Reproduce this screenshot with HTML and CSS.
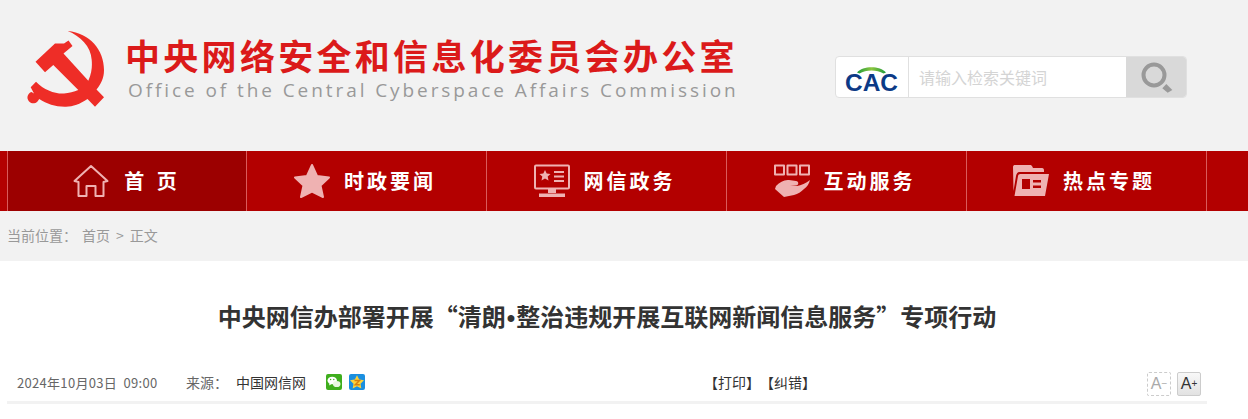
FILE: index.html
```html
<!DOCTYPE html>
<html lang="zh-CN">
<head>
<meta charset="utf-8">
<title>中央网信办部署开展“清朗•整治违规开展互联网新闻信息服务”专项行动</title>
<link rel="stylesheet" href="styles.css">
</head>
<body>
<header class="masthead">
  <svg class="emblem" viewBox="25 28 82 82" width="82" height="82" aria-hidden="true">
    <path class="emblem-fill" d="M35.500 61.700L55 43.500L64 43.500L68.500 40.500L72.500 46L63.500 53.500L88.300 80.700C92 72 92.200 66 91.700 60C91 46 80 36 67.700 31C90 33 104 50 104 70C104 78 101 84 96.500 89.500L104 97.300L95 106.700L87.500 99C80 104 73 106.700 66 106.700C56 107 47 104 39.300 99L38.500 100A5.800 5.800 0 1 1 31.500 92L34 93.500L30.700 87.300L36 81.700C44 90 55 94 64 93.500C69 93 74 92 78.300 90L53.300 65L45 72.300Z"/>
  </svg>
  <div class="brand">
    <div class="brand-cn">中央网络安全和信息化委员会办公室</div>
    <div class="brand-en">Office of the Central Cyberspace Affairs Commission</div>
  </div>
  <form class="search">
    <div class="search-logo">
      <svg class="cac-logo" viewBox="0 0 54 30" width="54" height="30" aria-hidden="true">
        <defs>
          <linearGradient id="cacArc" x1="0" y1="0" x2="1" y2="0">
            <stop offset="0" stop-color="#1f9a3c"/>
            <stop offset=".5" stop-color="#8cc63f"/>
            <stop offset="1" stop-color="#1f9a3c"/>
          </linearGradient>
        </defs>
        <path fill="url(#cacArc)" d="M12 10.500C18 3.500 35 3.500 41 10.500L38.500 11.500C32 7.500 21 7.500 14.500 11.500Z"/>
        <text class="cac-text" x="0" y="29" textLength="53" lengthAdjust="spacingAndGlyphs">CAC</text>
      </svg>
    </div>
    <div class="search-input">请输入检索关键词</div>
    <div class="search-btn">
      <svg class="glass" viewBox="0 0 34 34" width="34" height="34" aria-hidden="true">
        <circle class="glass-ring" cx="14" cy="15" r="10.500"/>
        <path class="glass-handle" d="M22.300 28.300L26.300 24L32.300 30L27.700 32.700Z"/>
      </svg>
    </div>
  </form>
</header>

<nav class="nav">
  <a class="nav-item is-active">
    <svg class="nav-icon" viewBox="0 0 36 34" width="36" height="34" aria-hidden="true">
      <path class="icon-line" d="M18 2L34.500 17L30.500 18L30.500 32L22.500 32L22.500 22L13.500 22L13.500 32L5.500 32L5.500 18L1.500 17Z"/>
    </svg>
    <span class="nav-text nav-text-wide">首 页</span>
  </a>
  <a class="nav-item">
    <svg class="nav-icon nav-icon-star" viewBox="0 0 38 36" width="38" height="36" aria-hidden="true">
      <path class="icon-star" d="M19 2L24 13L36 14.500L27.500 22.500L30 34L19 28.500L8 34L10.500 22.500L2 14.500L14 13Z"/>
    </svg>
    <span class="nav-text">时政要闻</span>
  </a>
  <a class="nav-item">
    <svg class="nav-icon" viewBox="0 0 36 34" width="36" height="34" aria-hidden="true">
      <rect class="icon-line" x="1" y="1.500" width="34" height="23" rx="1"/>
      <path class="icon-fill" d="M11 6L12.700 9.500L16.500 10L13.700 12.600L14.500 16.500L11 14.600L7.500 16.500L8.300 12.600L5.500 10L9.300 9.500Z"/>
      <path class="icon-fill" d="M20 7H30V9H20ZM20 11.500H30V13.500H20ZM20 16H30V18H20ZM14 25H22V29H14ZM5 29.500H31V33H5Z"/>
    </svg>
    <span class="nav-text">网信政务</span>
  </a>
  <a class="nav-item">
    <svg class="nav-icon" viewBox="0 0 36 34" width="36" height="34" aria-hidden="true">
      <path class="icon-line" d="M1 1.500H10V10.500H1ZM13.500 1.500H22.500V10.500H13.500ZM26 1.500H35V10.500H26Z"/>
      <path class="icon-fill" d="M2 22C6 18 10 15.500 15 16L22 17C25 17.500 25 21 22 21.500L16 22H23C27 21.500 32 19 36 16C35 20 33 23 30 25C27 28 24 30 20 31L10 33L1 25Z"/>
    </svg>
    <span class="nav-text">互动服务</span>
  </a>
  <a class="nav-item">
    <svg class="nav-icon" viewBox="0 0 36 34" width="36" height="34" aria-hidden="true">
      <path class="icon-fill" d="M0 3C0 1.500 1 1 2 1H17C18 1 19 1.500 19.500 3L20 4H29C30.500 4 31 5 31 6.500V8H7C4 8 3.500 10 3 12L0.500 27Z"/>
      <path class="icon-fill" d="M7.500 10H36L32 32H1.500L5 12C5.200 10.800 6 10 7.500 10Z"/>
      <path class="icon-dark" d="M9 15H17V25H9ZM20 16H28V18.500H20ZM20 21.500H28V24H20Z"/>
    </svg>
    <span class="nav-text">热点专题</span>
  </a>
</nav>

<div class="crumbs">
  <span class="crumb-label">当前位置：</span>
  <a class="crumb-link">首页</a>
  <span class="crumb-sep">&gt;</span>
  <a class="crumb-link">正文</a>
</div>

<main class="article">
  <h1 class="title">中央网信办部署开展“清朗<span class="title-dot">•</span>整治违规开展互联网新闻信息服务”专项行动</h1>
  <div class="meta">
    <span class="meta-date">2024年10月03日&nbsp; 09:00</span>
    <span class="meta-source">来源：</span>
    <span class="meta-origin">中国网信网</span>
    <span class="share">
      <svg viewBox="0 0 16 16" width="16" height="16" aria-hidden="true">
        <rect class="wx-bg" width="16" height="16" rx="2"/>
        <ellipse class="wx-bubble" cx="6.200" cy="6.500" rx="4.700" ry="3.800"/>
        <path class="wx-bubble" d="M3.500 9L3.200 11.500L6 9.800Z"/>
        <ellipse class="wx-bubble2" cx="10.700" cy="10" rx="3.800" ry="3.100"/>
        <circle class="wx-eye" cx="4.600" cy="5.500" r=".7"/>
        <circle class="wx-eye" cx="7.800" cy="5.500" r=".7"/>
      </svg>
      <svg viewBox="0 0 16 16" width="16" height="16" aria-hidden="true">
        <rect class="qz-bg" width="16" height="16" rx="2"/>
        <path class="qz-star" d="M8 1.200L10.200 5.600L15 6.300L11.500 9.700L12.300 14.500L8 12.200L3.700 14.500L4.500 9.700L1 6.300L5.800 5.600Z"/>
        <path class="qz-z" d="M5.500 6.500H10.500L6.300 10.700H10.800"/>
      </svg>
    </span>
    <span class="meta-tools">【打印】【纠错】</span>
    <span class="font-btns">
      <span class="font-btn font-btn-off">A<sup class="font-mark">−</sup></span>
      <span class="font-btn font-btn-on">A<sup class="font-mark">+</sup></span>
    </span>
  </div>
  <div class="rule"></div>
</main>
</body>
</html>
```
FILE: styles.css
```css
* { box-sizing: border-box; }
html, body { margin: 0; padding: 0; background: #fff; }
body { font-family: "Noto Sans CJK SC", "Liberation Sans", sans-serif; color: #333; text-spacing-trim: space-all; }

.masthead { height: 151px; background: #f2f2f2; display: flex; align-items: flex-start; padding: 28px 0 0 25px; }
.emblem { display: block; flex: none; margin-right: 18px; }
.emblem-fill { fill: #ee2d27; }
.brand { width: 614px; flex: none; }
.brand-cn { font-size: 35px; line-height: 44px; height: 44px; margin-top: 5px; font-weight: 700; letter-spacing: 3.300px; color: #db1a1a; white-space: nowrap; }
.brand-en { font-family: "Open Sans", sans-serif; font-size: 19px; line-height: 26px; letter-spacing: 2.920px; color: #999; white-space: nowrap; margin-left: 3px; }

.search { flex: none; margin: 28px 0 0 96px; width: 352px; height: 42px; display: flex; border: 1px solid #e0e0e0; border-radius: 4px; background: #fff; overflow: hidden; }
.search-logo { width: 73px; flex: none; border-right: 1px solid #e0e0e0; display: flex; align-items: center; justify-content: center; }
.cac-logo { display: block; overflow: visible; }
.cac-text { font-family: "Liberation Sans", sans-serif; font-size: 23px; font-weight: 700; fill: #0c3a86; }
.search-input { flex: 1; font-size: 16px; line-height: 40px; padding-left: 10px; color: #d4d4d4; }
.search-btn { width: 60px; flex: none; background: #d9d9d9; display: flex; align-items: center; justify-content: center; padding-left: 2px; }
.glass { display: block; }
.glass-ring { fill: none; stroke: #999; stroke-width: 4; }
.glass-handle { fill: #999; }

.nav { height: 60px; background: #b30000; display: flex; padding-left: 7px; }
.nav-item { width: 240px; flex: none; display: flex; align-items: center; justify-content: center; gap: 14px; padding-right: 4px; border-left: 1px solid #d95a5a; color: #fff; }
.nav-item:first-child { width: 239px; padding-right: 0; gap: 15px; }
.nav-item:last-child { width: 241px; padding-right: 5px; border-right: 1px solid #d95a5a; }
.is-active { background: #9c0000; }
.nav-icon { display: block; flex: none; }
.nav-icon-star { margin-right: -1px; }
.nav-text { font-size: 20px; font-weight: 700; letter-spacing: 3px; line-height: 28px; white-space: nowrap; }
.nav-text-wide { letter-spacing: 4px; word-spacing: 0; }
.icon-line { fill: none; stroke: #efb2b2; stroke-width: 2; stroke-linejoin: round; }
.icon-fill { fill: #efb2b2; }
.icon-star { fill: #efb2b2; stroke: #efb2b2; stroke-width: 2; stroke-linejoin: round; }
.icon-dark { fill: #b30000; }

.crumbs { height: 50px; background: #f2f2f2; padding: 0 0 2px 7px; display: flex; align-items: center; font-size: 14px; color: #999; white-space: pre; }
.crumb-label { margin-right: 5px; }
.crumb-sep { margin: 0 6px; }

.article { width: 1200px; margin-left: 7px; }
.title { margin: 0; padding-top: 37px; height: 107px; font-size: 24px; line-height: 36px; font-weight: 700; color: #333; text-align: center; white-space: nowrap; }
.title-dot { font-family: "Liberation Sans", sans-serif; padding: 0 1px; }
.meta { height: 33px; padding: 0 0 5px 10px; display: flex; align-items: center; font-size: 14px; white-space: nowrap; }
.meta-date { font-size: 13px; color: #666; width: 169px; flex: none; letter-spacing: .3px; }
.meta-source { color: #666; width: 50px; flex: none; }
.meta-origin { color: #333; width: 90px; flex: none; }
.share { display: flex; gap: 7px; width: 378px; flex: none; }
.share svg { display: block; }
.wx-bg { fill: #3fae1d; }
.wx-bubble { fill: #fff; }
.wx-bubble2 { fill: #e9f7e1; }
.wx-eye { fill: #3fae1d; }
.qz-bg { fill: #1b8fe0; }
.qz-star { fill: #fdd23a; }
.qz-z { fill: none; stroke: #d9800e; stroke-width: 1.500; }
.meta-tools { color: #333; width: 443px; flex: none; }
.font-btns { display: flex; gap: 6px; margin-top: 3px; }
.font-btn { width: 24px; height: 24px; border-radius: 2px; display: flex; align-items: center; justify-content: center; font-family: "Liberation Sans", sans-serif; font-size: 16px; line-height: 20px; font-weight: 400; }
.font-btn-off { border: 1px dashed #ccc; color: #aaa; }
.font-btn-on { border: 1px solid #ccc; color: #333; background: linear-gradient(#f8f8f8, #e2e2e2); }
.font-mark { font-size: 10px; line-height: 10px; vertical-align: 7px; }
.rule { height: 3px; background: #f2f2f2; }
```
